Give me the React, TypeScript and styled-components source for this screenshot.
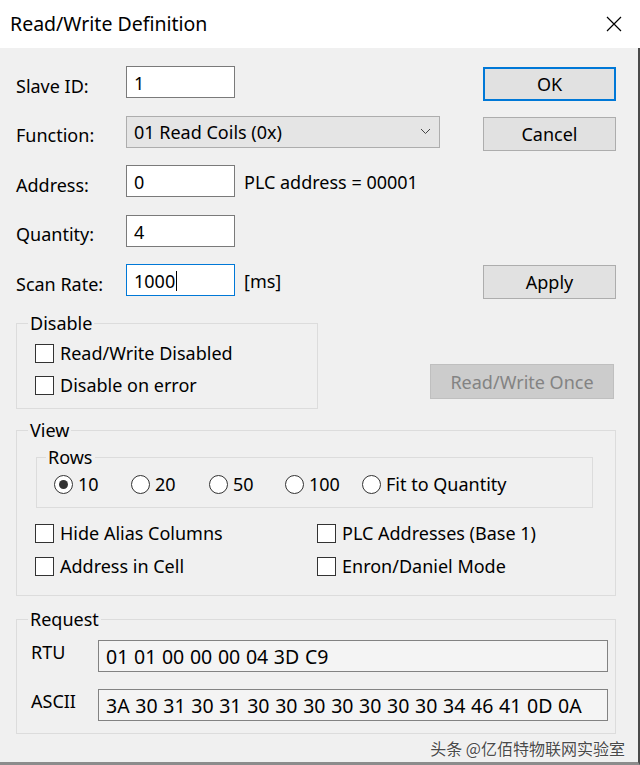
import React from 'react';
import styled, { createGlobalStyle } from 'styled-components';

const FONT = `"Noto Sans", "Open Sans", "DejaVu Sans", sans-serif`;
const CJK = `"Noto Sans CJK SC", "Noto Sans", sans-serif`;

const GlobalStyle = createGlobalStyle`
  html, body { margin: 0; padding: 0; background: #f0f0f0; }
  body { font-family: ${FONT}; }
  * { box-sizing: border-box; }
`;

const Window = styled.div`
  width: 640px;
  height: 765px;
  display: flex;
  flex-direction: column;
  overflow: hidden;
  font-family: ${FONT};
  font-size: 18px;
  line-height: 20px;
  color: #000;
`;

const TitleBar = styled.div`
  flex: 0 0 48px;
  background: #fff;
  display: flex;
  align-items: center;
  justify-content: space-between;
  padding: 0 18px 0 10px;
`;

const Title = styled.span`
  font-size: 19.5px;
  line-height: 20px;
  margin-top: -1px;
`;

const Body = styled.div`
  flex: 1;
  display: flex;
  flex-direction: column;
  padding: 18px 22px 0 16px;
  border-right: 2px solid #4a4a4a;
  border-bottom: 3px solid #8c8c8c;
  background: #f0f0f0;
`;

const TopGrid = styled.div`
  display: grid;
  grid-template-columns: 110px 109px 1fr 133px;
  grid-auto-rows: 32px;
  row-gap: 17.5px;
  align-items: center;
`;

const Label = styled.span`
  grid-column: 1;
  padding-top: 7px;
`;

const Field = styled.div<{ $focused?: boolean }>`
  grid-column: 2;
  height: 32px;
  background: #fff;
  border: 1px solid ${(p) => (p.$focused ? '#0078d7' : '#7a7a7a')};
  padding: 2px 0 0 7px;
  display: flex;
  align-items: center;
`;

const Caret = styled.span`
  display: inline-block;
  width: 1px;
  height: 20px;
  background: #000;
  margin-left: 1px;
`;

const Combo = styled.div`
  grid-column: 2 / span 2;
  width: 314px;
  height: 32px;
  background: #e5e5e5;
  border: 1px solid #adadad;
  padding: 0 8px 0 7px;
  display: flex;
  align-items: center;
  justify-content: space-between;
`;

const Note = styled.span`
  grid-column: 3;
  margin-left: 9px;
  padding-top: 2px;
`;

const Button = styled.div<{ $primary?: boolean; $disabled?: boolean }>`
  height: 34px;
  display: flex;
  align-items: center;
  justify-content: center;
  background: ${(p) => (p.$disabled ? '#cccccc' : '#e1e1e1')};
  color: ${(p) => (p.$disabled ? '#838383' : '#000')};
  border: ${(p) =>
    p.$primary ? '2px solid #0078d7' : p.$disabled ? '1px solid #bfbfbf' : '1px solid #adadad'};
`;

const SideButton = styled(Button)`
  grid-column: 4;
  align-self: start;
  margin-top: 1px;
`;

const DisableRow = styled.div`
  display: flex;
  align-items: flex-start;
  margin-top: 17px;
`;

const OnceButton = styled(Button)`
  width: 184px;
  height: 35px;
  margin: 51px 2px 0 auto;
`;

const GroupBox = styled.fieldset<{ $width?: number; $top?: number; $left?: number }>`
  margin: ${(p) => p.$top ?? 0}px 0 0 ${(p) => p.$left ?? 0}px;
  padding: 0;
  min-width: 0;
  border: 1px solid #dcdcdc;
  width: ${(p) => (p.$width ? `${p.$width}px` : 'auto')};
`;

const Legend = styled.legend<{ $offset?: number }>`
  padding: 0 2px;
  margin-left: ${(p) => p.$offset ?? 11}px;
  line-height: 20px;
  font-size: 18px;
`;

const GroupContent = styled.div<{ $pad: string }>`
  padding: ${(p) => p.$pad};
  display: flex;
  flex-direction: column;
`;

const CheckList = styled.div`
  display: flex;
  flex-direction: column;
  gap: 8px;
`;

const CheckItem = styled.div`
  height: 24px;
  display: flex;
  align-items: center;
  gap: 6px;
`;

const CheckBox = styled.span`
  width: 19px;
  height: 19px;
  border: 1px solid #333;
  background: #fff;
  flex: 0 0 auto;
`;

const RadioRow = styled.div`
  display: grid;
  grid-template-columns: 77px 78px 76px 77px auto;
  height: 24px;
  align-items: center;
`;

const RadioItem = styled.div`
  display: flex;
  align-items: center;
  gap: 5px;
`;

const RadioCircle = styled.span<{ $checked?: boolean }>`
  width: 19px;
  height: 19px;
  border-radius: 50%;
  border: 1px solid #333;
  background: #fff;
  display: flex;
  align-items: center;
  justify-content: center;
  flex: 0 0 auto;
  &::after {
    content: '';
    display: ${(p) => (p.$checked ? 'block' : 'none')};
    width: 9px;
    height: 9px;
    border-radius: 50%;
    background: #333;
  }
`;

const OptionGrid = styled.div`
  display: grid;
  grid-template-columns: 282px auto;
  grid-auto-rows: 24px;
  row-gap: 9px;
  margin-top: 13px;
`;

const RequestGrid = styled.div`
  display: grid;
  grid-template-columns: 67px 1fr;
  grid-auto-rows: 32px;
  row-gap: 17px;
`;

const RequestLabel = styled.span`
  margin-top: 2px;
`;

const ReadOnlyField = styled.div`
  height: 32px;
  background: #f4f4f4;
  border: 1px solid #828282;
  padding: 2px 0 0 7px;
  display: flex;
  align-items: center;
  white-space: pre;
  overflow: hidden;
  font-size: 19.5px;
  word-spacing: 0.6px;
`;

const Watermark = styled.div`
  height: 27px;
  display: flex;
  justify-content: flex-end;
  align-items: center;
  margin-right: -9px;
  font-family: ${CJK};
  font-size: 16px;
  color: #4a4a4a;
  text-shadow: 0 0 1px #fff, 0 0 2px #fff;
`;

const CloseIcon = () => (
  <svg width="16" height="16" viewBox="0 0 16 16">
    <path d="M1 1 L15 15 M15 1 L1 15" stroke="#000" strokeWidth="1.2" fill="none" />
  </svg>
);

const Chevron = () => (
  <svg width="11" height="7" viewBox="0 0 11 7">
    <path d="M1 1 L5.5 5.5 L10 1" stroke="#444" strokeWidth="1" fill="none" />
  </svg>
);

const Check = ({ label }: { label: string }) => (
  <CheckItem>
    <CheckBox />
    <span>{label}</span>
  </CheckItem>
);

const Radio = ({ label, checked }: { label: string; checked?: boolean }) => (
  <RadioItem>
    <RadioCircle $checked={checked} />
    <span>{label}</span>
  </RadioItem>
);

export default function App() {
  return (
    <>
      <GlobalStyle />
      <Window>
        <TitleBar>
          <Title>Read/Write Definition</Title>
          <CloseIcon />
        </TitleBar>
        <Body>
          <TopGrid>
            <Label>Slave ID:</Label>
            <Field>1</Field>
            <SideButton $primary>OK</SideButton>

            <Label>Function:</Label>
            <Combo>
              <span>01 Read Coils (0x)</span>
              <Chevron />
            </Combo>
            <SideButton>Cancel</SideButton>

            <Label>Address:</Label>
            <Field>0</Field>
            <Note>PLC address = 00001</Note>

            <Label>Quantity:</Label>
            <Field>4</Field>

            <Label>Scan Rate:</Label>
            <Field $focused>
              1000
              <Caret />
            </Field>
            <Note>[ms]</Note>
            <SideButton>Apply</SideButton>
          </TopGrid>

          <DisableRow>
            <GroupBox $width={302}>
              <Legend>Disable</Legend>
              <GroupContent $pad="8px 0 11px 18px">
                <CheckList>
                  <Check label="Read/Write Disabled" />
                  <Check label="Disable on error" />
                </CheckList>
              </GroupContent>
            </GroupBox>
            <OnceButton $disabled>Read/Write Once</OnceButton>
          </DisableRow>

          <GroupBox $top={11}>
            <Legend>View</Legend>
            <GroupContent $pad="7px 22px 17px 18px">
              <GroupBox $left={1}>
                <Legend $offset={9}>Rows</Legend>
                <GroupContent $pad="5px 0 11px 17px">
                  <RadioRow>
                    <Radio label="10" checked />
                    <Radio label="20" />
                    <Radio label="50" />
                    <Radio label="100" />
                    <Radio label="Fit to Quantity" />
                  </RadioRow>
                </GroupContent>
              </GroupBox>
              <OptionGrid>
                <Check label="Hide Alias Columns" />
                <Check label="PLC Addresses (Base 1)" />
                <Check label="Address in Cell" />
                <Check label="Enron/Daniel Mode" />
              </OptionGrid>
            </GroupContent>
          </GroupBox>

          <GroupBox $top={13}>
            <Legend>Request</Legend>
            <GroupContent $pad="11px 7px 12px 14px">
              <RequestGrid>
                <RequestLabel>RTU</RequestLabel>
                <ReadOnlyField>01 01 00 00 00 04 3D C9</ReadOnlyField>
                <RequestLabel>ASCII</RequestLabel>
                <ReadOnlyField>3A 30 31 30 31 30 30 30 30 30 30 30 34 46 41 0D 0A</ReadOnlyField>
              </RequestGrid>
            </GroupContent>
          </GroupBox>

          <Watermark>头条 @亿佰特物联网实验室</Watermark>
        </Body>
      </Window>
    </>
  );
}
